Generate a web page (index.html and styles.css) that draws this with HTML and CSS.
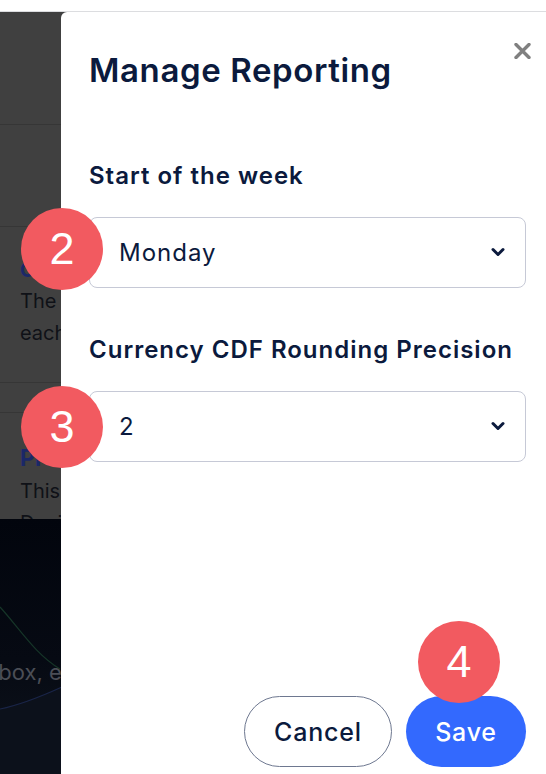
FILE: index.html
```html
<html>
<head>
  <link rel="stylesheet" href="styles.css">
</head>
<body>

<div class="topbar"></div>

<div class="backdrop">
  <div class="bd-header"></div>
  <div class="bd-row"></div>
  <div class="bd-item">
    <h4 class="bd-title">Calendar settings</h4>
    <p class="bd-text">The first day of the week used by</p>
    <p class="bd-text">each report and every chart.</p>
  </div>
  <div class="bd-row bd-row-small"></div>
  <div class="bd-item bd-item-last">
    <h4 class="bd-title bd-title-big">Precision</h4>
    <p class="bd-text">This sets the rounding used for amounts.</p>
    <p class="bd-text">Decimal places are applied everywhere.</p>
  </div>
  <div class="bd-hero">
    <svg class="bd-curves" width="546" height="256" viewBox="0 0 546 256">
      <path d="M0 88 C20 110 35 135 60 150" fill="none" stroke="#163528" stroke-width="1.2"/>
      <path d="M0 190 C20 186 40 178 62 168 L62 256 L0 256 Z" fill="#0c111b"/>
      <path d="M0 190 C20 186 40 178 62 168" fill="none" stroke="#1a2548" stroke-width="1.2"/>
    </svg>
    <p class="bd-hero-text">inbox, email and more</p>
  </div>
</div>

<aside class="drawer">
  <button class="close" aria-label="Close">
    <svg width="17" height="16" viewBox="0 0 17 16">
      <path d="M2 1.5 L15 14.5 M15 1.5 L2 14.5" stroke="#808080" stroke-width="3.4" stroke-linecap="round"/>
    </svg>
  </button>

  <h2 class="drawer-title">Manage Reporting</h2>

  <div class="form-group">
    <label for="week-start">Start of the week</label>
    <div class="select-wrap">
      <select id="week-start">
        <option>Monday</option>
        <option>Sunday</option>
      </select>
      <svg class="chevron" width="14" height="10" viewBox="0 0 14 10">
        <path d="M2 2.5 L7 7.5 L12 2.5" fill="none" stroke="#0b1a3d" stroke-width="3" stroke-linecap="round" stroke-linejoin="round"/>
      </svg>
    </div>
  </div>

  <div class="form-group">
    <label for="precision">Currency CDF Rounding Precision</label>
    <div class="select-wrap">
      <select id="precision">
        <option>2</option>
        <option>0</option>
        <option>1</option>
        <option>3</option>
      </select>
      <svg class="chevron" width="14" height="10" viewBox="0 0 14 10">
        <path d="M2 2.5 L7 7.5 L12 2.5" fill="none" stroke="#0b1a3d" stroke-width="3" stroke-linecap="round" stroke-linejoin="round"/>
      </svg>
    </div>
  </div>

  <div class="actions">
    <button class="btn btn-outline">Cancel</button>
    <button class="btn btn-primary">Save</button>
  </div>
</aside>

<span class="step step-2">2</span>
<span class="step step-3">3</span>
<span class="step step-4">4</span>

</body>
</html>
```

FILE: styles.css
```css
* {
  box-sizing: border-box;
}

body {
  margin: 0;
  width: 546px;
  height: 774px;
  overflow: hidden;
  position: relative;
  font-family: "Inter", "Open Sans", sans-serif;
  background: #fff;
}

.topbar {
  height: 12px;
  background: #fff;
  border-bottom: 1px solid #dcdde0;
}

/* dimmed page behind the drawer */
.backdrop {
  height: 762px;
  background: #404040;
  display: flex;
  flex-direction: column;
}

.bd-header {
  height: 113px;
  border-bottom: 1px solid #363636;
}

.bd-row {
  height: 102px;
  border-bottom: 1px solid #363636;
}

.bd-row-small {
  height: 30px;
}

.bd-item {
  height: 156px;
  padding: 30px 0 0 20px;
  border-bottom: 1px solid #363636;
  overflow: hidden;
}

.bd-item-last {
  height: 106px;
  border-bottom: none;
}

.bd-title {
  margin: 0;
  font-size: 20px;
  line-height: 26px;
  font-weight: 700;
  color: #1b2868;
  white-space: nowrap;
}

.bd-title-big {
  font-size: 23px;
  line-height: 30px;
}

.bd-text {
  margin: 0;
  font-size: 20px;
  line-height: 32px;
  color: #0f1117;
  white-space: nowrap;
}

.bd-title + .bd-text {
  margin-top: 2px;
}

.bd-hero {
  flex: 1;
  position: relative;
  background: linear-gradient(#02050d, #060a13 55%, #0f141d);
  overflow: hidden;
}

.bd-curves {
  position: absolute;
  left: 0;
  top: 0;
}

.bd-hero-text {
  position: relative;
  margin: 0;
  padding-top: 140px;
  text-indent: -20px;
  white-space: nowrap;
  font-size: 22px;
  color: #4b4e56;
}

/* drawer */
.drawer {
  position: absolute;
  top: 12px;
  left: 61px;
  right: 0;
  bottom: 0;
  background: #fff;
  border-top-left-radius: 6px;
  padding: 38px 20px 7px 28px;
  display: flex;
  flex-direction: column;
}

.close {
  position: absolute;
  top: 31px;
  right: 15px;
  width: 17px;
  height: 16px;
  padding: 0;
  border: none;
  background: none;
  cursor: pointer;
}

.close svg {
  display: block;
}

.drawer-title {
  margin: 0;
  font-size: 33px;
  line-height: 40px;
  font-weight: 600;
  letter-spacing: 0.6px;
  color: #0b1a3d;
}

.form-group {
  margin-top: 71px;
}

.form-group + .form-group {
  margin-top: 47px;
}

label {
  display: block;
  font-size: 24px;
  line-height: 30px;
  font-weight: 600;
  letter-spacing: 1px;
  color: #0b1a3d;
  margin-bottom: 26px;
  white-space: nowrap;
}

.select-wrap {
  position: relative;
}

select {
  appearance: none;
  -webkit-appearance: none;
  display: block;
  width: 100%;
  height: 71px;
  padding: 0 50px 0 29px;
  border: 1px solid #c6c9d6;
  border-radius: 8px;
  background: #fff;
  font-family: inherit;
  font-size: 24px;
  letter-spacing: 1px;
  color: #0b1a3d;
}

.chevron {
  position: absolute;
  right: 21px;
  top: 30px;
  pointer-events: none;
}

.actions {
  margin-top: auto;
  display: flex;
  justify-content: flex-end;
  gap: 14px;
}

.btn {
  height: 71px;
  padding: 0;
  border-radius: 36px;
  font-family: inherit;
  font-size: 25px;
  font-weight: 500;
  letter-spacing: 0.8px;
  cursor: pointer;
}

.btn-outline {
  width: 148px;
  background: #fff;
  border: 1px solid #6e7890;
  color: #0b1a3d;
}

.btn-primary {
  width: 120px;
  background: #3369fe;
  border: none;
  color: #fff;
}

/* tutorial step markers */
.step {
  position: absolute;
  width: 82px;
  height: 82px;
  border-radius: 50%;
  background: #f25a60;
  color: #fff;
  font-family: "Liberation Sans", Arial, sans-serif;
  font-size: 45px;
  line-height: 82px;
  text-align: center;
}

.step-2 {
  left: 21px;
  top: 208px;
}

.step-3 {
  left: 21px;
  top: 386px;
}

.step-4 {
  left: 418px;
  top: 621px;
}
```
